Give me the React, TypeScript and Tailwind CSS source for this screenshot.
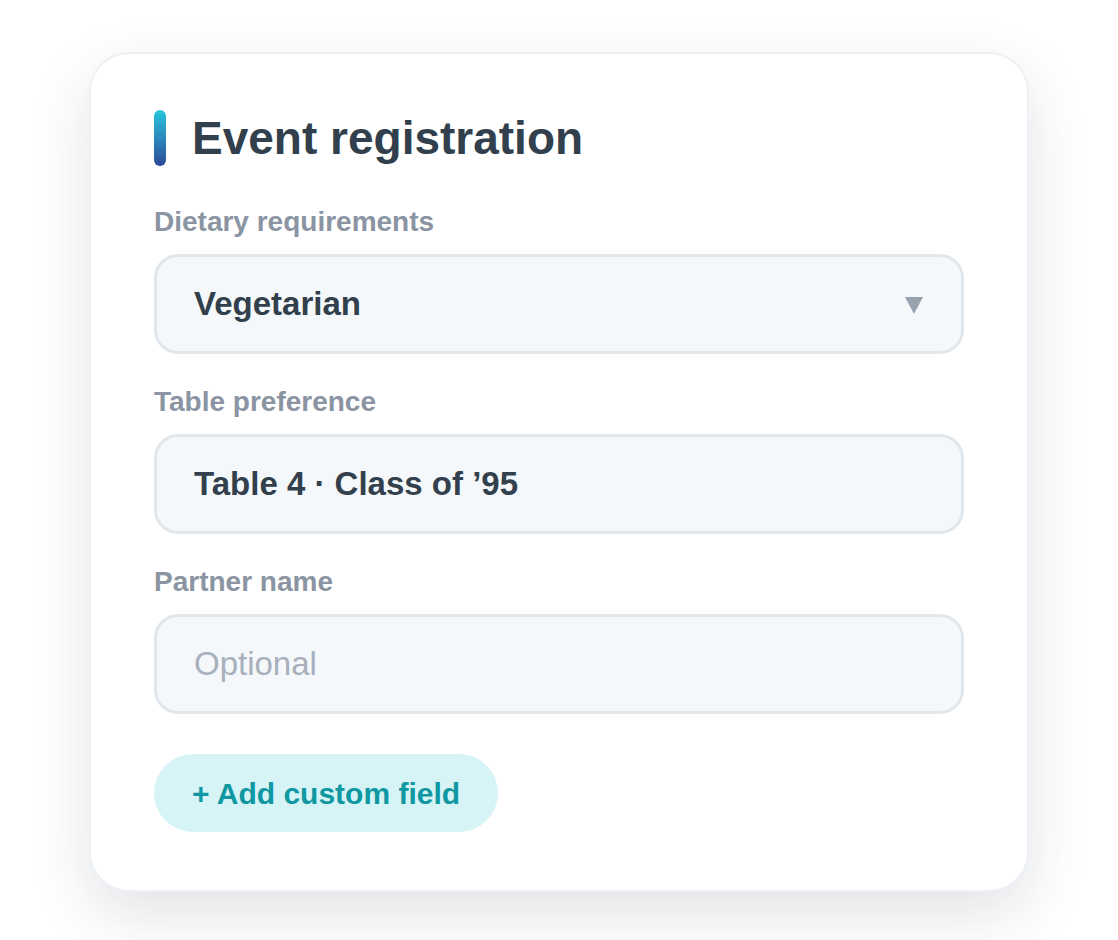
import React from 'react'

const font = { fontFamily: '"Liberation Sans", Arial, sans-serif' }

function FieldLabel({ children }: { children: React.ReactNode }) {
  return (
    <div className="text-[28px] leading-[32px] font-bold text-[#8a94a2] mb-4">{children}</div>
  )
}

function FieldBox({ children }: { children: React.ReactNode }) {
  return (
    <div className="h-[100px] flex items-center justify-between pl-[37px] pr-[38px] rounded-[24px] border-[3px] border-[#e2e7ec] bg-[#f5f8fa]">
      {children}
    </div>
  )
}

export default function App() {
  return (
    <div className="min-h-screen bg-white flex justify-center pt-[52px]" style={font}>
      <div className="w-[940px] h-[840px] rounded-[40px] border-2 border-[#edf0f4] bg-white pt-[56px] pb-[58px] px-[63px] shadow-[0_22px_60px_rgba(30,41,59,0.13)]">
        {/* Header */}
        <div className="flex items-center h-[56px]">
          <div className="w-3 h-[56px] rounded-full bg-gradient-to-b from-[#25c8da] to-[#2a4a9a]" />
          <h1 className="ml-[26px] text-[46px] leading-[56px] font-bold text-[#323f4c]">Event registration</h1>
        </div>

        <div className="mt-[40px]">
          <FieldLabel>Dietary requirements</FieldLabel>
          <FieldBox>
            <span className="text-[33px] font-bold text-[#323f4c]">Vegetarian</span>
            <svg width="18" height="17" viewBox="0 0 18 17" className="mt-[2px]">
              <polygon points="0,0 18,0 9,17" fill="#97a2ae" />
            </svg>
          </FieldBox>
        </div>

        <div className="mt-[32px]">
          <FieldLabel>Table preference</FieldLabel>
          <FieldBox>
            <span className="text-[33px] font-bold text-[#323f4c]">Table 4 · Class of ’95</span>
          </FieldBox>
        </div>

        <div className="mt-[32px]">
          <FieldLabel>Partner name</FieldLabel>
          <FieldBox>
            <span className="text-[33px] text-[#a7b0bc]">Optional</span>
          </FieldBox>
        </div>

        <button className="mt-10 h-[78px] px-[38px] rounded-full bg-[#d6f3f6] text-[30px] font-bold text-[#0f98a2]">
          + Add custom field
        </button>
      </div>
    </div>
  )
}
